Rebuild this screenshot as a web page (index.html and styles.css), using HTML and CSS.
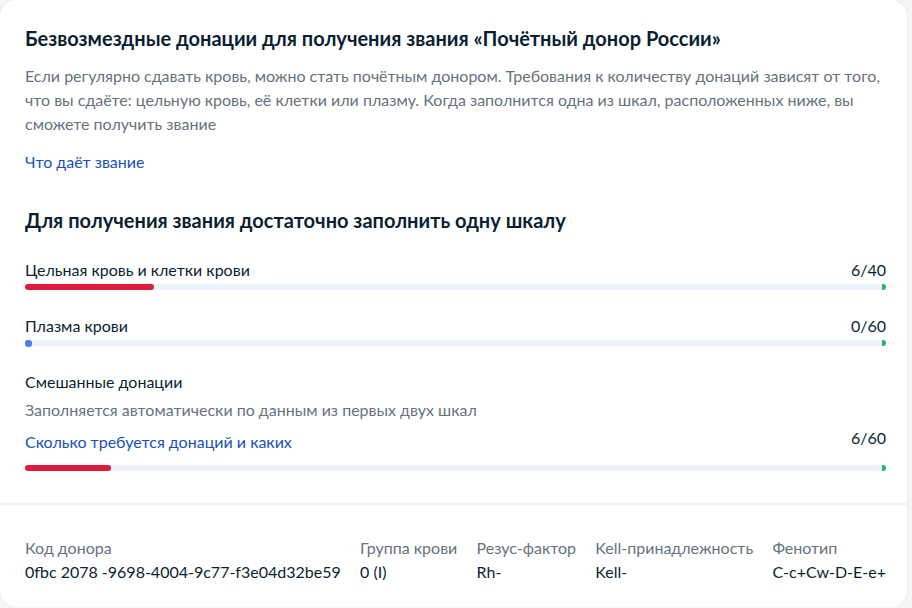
FILE: index.html
```html
<!DOCTYPE html>
<html lang="ru">
<head>
<meta charset="utf-8">
<title>Почётный донор</title>
<link rel="stylesheet" href="styles.css">
</head>
<body>
<div class="card">
  <section class="main">
    <h2 class="title">Безвозмездные донации для получения звания «Почётный донор России»</h2>
    <p class="lead">Если регулярно сдавать кровь, можно стать почётным донором. Требования к количеству донаций зависят от того, что вы сдаёте: цельную кровь, её клетки или плазму. Когда заполнится одна из шкал, расположенных ниже, вы сможете получить звание</p>
    <a class="link link-about" href="#">Что даёт звание</a>

    <h3 class="subtitle">Для получения звания достаточно заполнить одну шкалу</h3>

    <div class="scale">
      <div class="scale-head">
        <span class="scale-name">Цельная кровь и клетки крови</span>
        <span class="scale-count">6/40</span>
      </div>
      <div class="track"><div class="fill fill-red" style="width:15%"></div><span class="goal"></span></div>
    </div>

    <div class="scale">
      <div class="scale-head">
        <span class="scale-name">Плазма крови</span>
        <span class="scale-count">0/60</span>
      </div>
      <div class="track"><div class="fill fill-empty"></div><span class="goal"></span></div>
    </div>

    <div class="scale scale-mixed">
      <div class="scale-name">Смешанные донации</div>
      <div class="scale-hint">Заполняется автоматически по данным из первых двух шкал</div>
      <div class="scale-head scale-head-mixed">
        <a class="link" href="#">Сколько требуется донаций и каких</a>
        <span class="scale-count">6/60</span>
      </div>
      <div class="track"><div class="fill fill-red" style="width:10%"></div><span class="goal"></span></div>
    </div>
  </section>

  <footer class="info">
    <div class="info-item">
      <div class="info-label">Код донора</div>
      <div class="info-value">0fbc 2078 -9698-4004-9c77-f3e04d32be59</div>
    </div>
    <div class="info-item">
      <div class="info-label">Группа крови</div>
      <div class="info-value">0 (I)</div>
    </div>
    <div class="info-item">
      <div class="info-label">Резус-фактор</div>
      <div class="info-value">Rh-</div>
    </div>
    <div class="info-item">
      <div class="info-label">Kell-принадлежность</div>
      <div class="info-value">Kell-</div>
    </div>
    <div class="info-item">
      <div class="info-label">Фенотип</div>
      <div class="info-value">C-c+Cw-D-E-e+</div>
    </div>
  </footer>
</div>
</body>
</html>
```

FILE: styles.css
```css
* {
  box-sizing: border-box;
}

html, body {
  margin: 0;
  padding: 0;
  background: #f4f6f9;
}

body {
  font-family: Lato, "Noto Sans", sans-serif;
  color: #0b1f33;
  font-size: 16px;
  line-height: 24px;
}

.card {
  width: 907px;
  height: 607px;
  background: #ffffff;
  border-radius: 16px;
  box-shadow: 0 0 2px rgba(11, 31, 51, 0.12);
  overflow: hidden;
}

.main {
  padding: 24px 21px 32px 25px;
  border-bottom: 2px solid #eef2f8;
}

.title {
  margin: 0;
  font-size: 20px;
  line-height: 28px;
  font-weight: 700;
}

.lead {
  margin: 12px 0 0;
  color: #66727f;
  font-size: 16px;
  line-height: 24px;
}

.link {
  color: #1a52bd;
  text-decoration: none;
}

.link-about {
  display: block;
  margin-top: 14px;
}

.subtitle {
  margin: 32px 0 0;
  font-size: 20px;
  line-height: 28px;
  font-weight: 700;
}

.scale {
  margin-top: 24px;
}

.scale-head {
  display: flex;
  justify-content: space-between;
  align-items: flex-start;
}

.scale-hint {
  margin-top: 4px;
  color: #66727f;
}

.scale-head-mixed {
  margin-top: 4px;
}

.scale-head-mixed .link {
  margin-top: 4px;
}

.track {
  position: relative;
  height: 6px;
  margin-top: 2px;
  background: #eef2fa;
  border-radius: 3px;
}

.scale-mixed .track {
  margin-top: 11px;
}

.fill {
  height: 6px;
  border-radius: 3px;
}

.fill-red {
  background: #dc1b3d;
}

.fill-empty {
  width: 7px;
  height: 7px;
  margin-top: -0.5px;
  background: #4a7ee8;
}

/* finish mark at the end of every scale */
.goal {
  position: absolute;
  right: 0;
  top: 0;
  width: 4px;
  height: 6px;
  background: #2cb36a;
  border-radius: 0 3px 3px 0;
}

.info {
  display: flex;
  justify-content: space-between;
  padding: 31px 21px 22px 25px;
}

.info-label {
  color: #66727f;
}

.info-value {
  color: #0b1f33;
}
```
